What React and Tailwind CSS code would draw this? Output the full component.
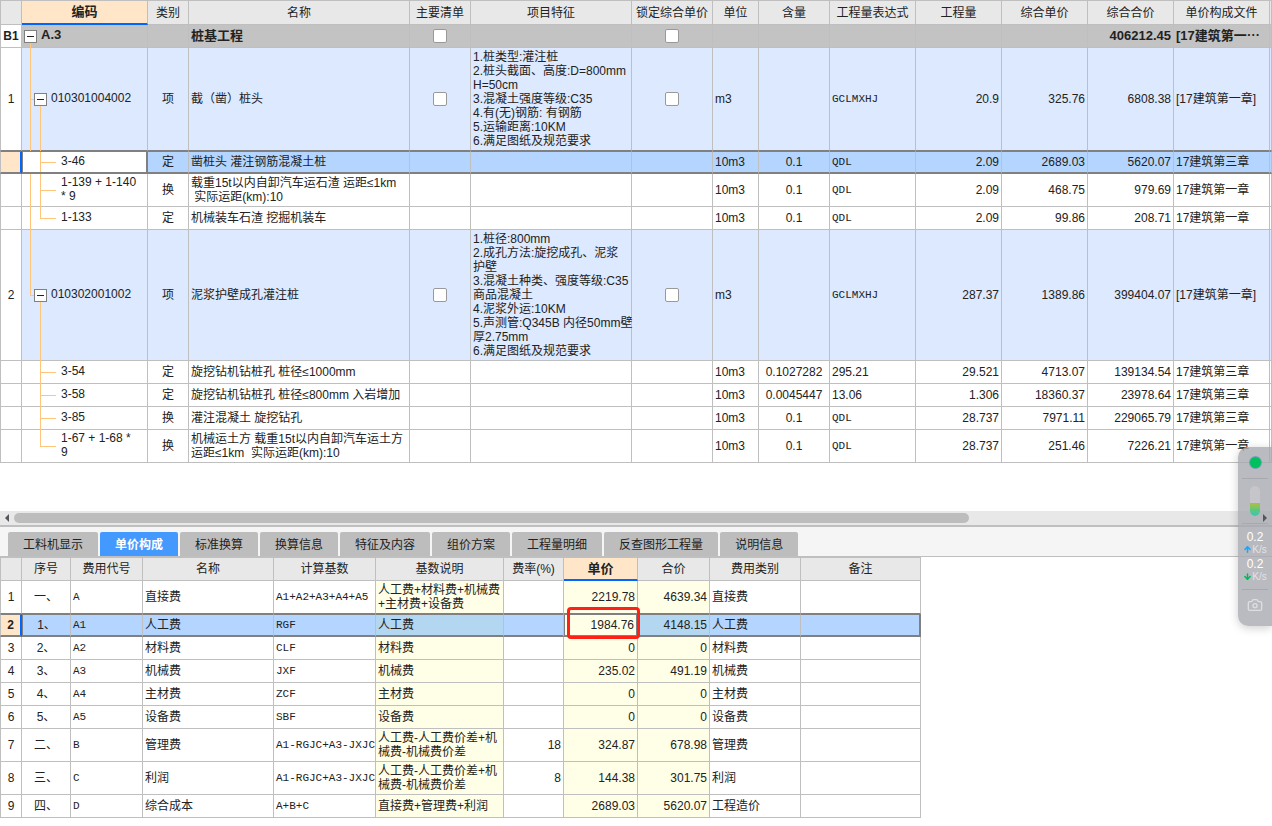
import { useState } from 'react';
import { Camera, ArrowUp, ArrowDown } from 'lucide-react';

const MONO = "font-['Liberation_Mono','Noto_Sans_CJK_SC',monospace] text-[11px]";

const mainColumns = [
    { key: 'no', title: '', col: 'w-[22px]', align: 'text-center' },
    { key: 'code', title: '编码', col: 'w-[126px]', align: 'text-left' },
    { key: 'type', title: '类别', col: 'w-[41px]', align: 'text-center' },
    { key: 'name', title: '名称', col: 'w-[221px]', align: 'text-left' },
    { key: 'main', title: '主要清单', col: 'w-[61px]', align: 'text-center' },
    { key: 'feature', title: '项目特征', col: 'w-[161px]', align: 'text-left' },
    { key: 'lock', title: '锁定综合单价', col: 'w-[81px]', align: 'text-center' },
    { key: 'unit', title: '单位', col: 'w-[46px]', align: 'text-left' },
    { key: 'content', title: '含量', col: 'w-[71px]', align: 'text-center' },
    { key: 'expr', title: '工程量表达式', col: 'w-[86px]', align: 'text-left' },
    { key: 'qty', title: '工程量', col: 'w-[86px]', align: 'text-right' },
    { key: 'price', title: '综合单价', col: 'w-[86px]', align: 'text-right' },
    { key: 'total', title: '综合合价', col: 'w-[86px]', align: 'text-right' },
    { key: 'file', title: '单价构成文件', col: 'w-[96px]', align: 'text-left' },
    { key: 'rest', title: '', col: '', align: 'text-left' },
];

const mainRows = [
    { id: 'b1', no: 'B1', level: 0, h: 'h-[23px]', code: 'A.3', name: '桩基工程', total: '406212.45', file: '[17建筑第一⋯' },
    {
        id: 'r1', no: '1', level: 1, h: 'h-[103px]', code: '010301004002', type: '项', name: '截（凿）桩头',
        feature: '1.桩类型:灌注桩\n2.桩头截面、高度:D=800mm\nH=50cm\n3.混凝土强度等级:C35\n4.有(无)钢筋: 有钢筋\n5.运输距离:10KM\n6.满足图纸及规范要求',
        unit: 'm3', expr: 'GCLMXHJ', qty: '20.9', price: '325.76', total: '6808.38', file: '[17建筑第一章]',
    },
    { id: 'r2', level: 2, h: 'h-[23px]', outer: true, code: '3-46', type: '定', name: '凿桩头 灌注钢筋混凝土桩', unit: '10m3', content: '0.1', expr: 'QDL', qty: '2.09', price: '2689.03', total: '5620.07', file: '17建筑第三章' },
    { id: 'r3', level: 2, h: 'h-[33px]', outer: true, code: '1-139 + 1-140\n* 9', type: '换', name: '载重15t以内自卸汽车运石渣 运距≤1km\n 实际运距(km):10', unit: '10m3', content: '0.1', expr: 'QDL', qty: '2.09', price: '468.75', total: '979.69', file: '17建筑第一章' },
    { id: 'r4', level: 2, h: 'h-[23px]', outer: true, last: true, code: '1-133', type: '定', name: '机械装车石渣 挖掘机装车', unit: '10m3', content: '0.1', expr: 'QDL', qty: '2.09', price: '99.86', total: '208.71', file: '17建筑第一章' },
    {
        id: 'r5', no: '2', level: 1, last: true, h: 'h-[131px]', code: '010302001002', type: '项', name: '泥浆护壁成孔灌注桩',
        feature: '1.桩径:800mm\n2.成孔方法:旋挖成孔、泥浆\n护壁\n3.混凝土种类、强度等级:C35\n商品混凝土\n4.泥浆外运:10KM\n5.声测管:Q345B 内径50mm壁\n厚2.75mm\n6.满足图纸及规范要求',
        unit: 'm3', expr: 'GCLMXHJ', qty: '287.37', price: '1389.86', total: '399404.07', file: '[17建筑第一章]',
    },
    { id: 'r6', level: 2, h: 'h-[23px]', code: '3-54', type: '定', name: '旋挖钻机钻桩孔 桩径≤1000mm', unit: '10m3', content: '0.1027282', expr: '295.21', qty: '29.521', price: '4713.07', total: '139134.54', file: '17建筑第三章' },
    { id: 'r7', level: 2, h: 'h-[23px]', code: '3-58', type: '定', name: '旋挖钻机钻桩孔 桩径≤800mm 入岩增加', unit: '10m3', content: '0.0045447', expr: '13.06', qty: '1.306', price: '18360.37', total: '23978.64', file: '17建筑第三章' },
    { id: 'r8', level: 2, h: 'h-[23px]', code: '3-85', type: '换', name: '灌注混凝土 旋挖钻孔', unit: '10m3', content: '0.1', expr: 'QDL', qty: '28.737', price: '7971.11', total: '229065.79', file: '17建筑第三章' },
    { id: 'r9', level: 2, h: 'h-[33px]', last: true, code: '1-67 + 1-68 *\n9', type: '换', name: '机械运土方 载重15t以内自卸汽车运土方\n运距≤1km  实际运距(km):10', unit: '10m3', content: '0.1', expr: 'QDL', qty: '28.737', price: '251.46', total: '7226.21', file: '17建筑第一章' },
];

const tabs = ['工料机显示', '单价构成', '标准换算', '换算信息', '特征及内容', '组价方案', '工程量明细', '反查图形工程量', '说明信息'];

const feeColumns = [
    { key: 'no', title: '', col: 'w-[22px]', align: 'text-center' },
    { key: 'seq', title: '序号', col: 'w-[49px]', align: 'text-center' },
    { key: 'code', title: '费用代号', col: 'w-[72px]', align: 'text-left' },
    { key: 'name', title: '名称', col: 'w-[131px]', align: 'text-left' },
    { key: 'base', title: '计算基数', col: 'w-[102px]', align: 'text-left' },
    { key: 'desc', title: '基数说明', col: 'w-[128px]', align: 'text-left' },
    { key: 'rate', title: '费率(%)', col: 'w-[60px]', align: 'text-right' },
    { key: 'price', title: '单价', col: 'w-[74px]', align: 'text-right' },
    { key: 'total', title: '合价', col: 'w-[72px]', align: 'text-right' },
    { key: 'kind', title: '费用类别', col: 'w-[91px]', align: 'text-left' },
    { key: 'note', title: '备注', col: 'w-[120px]', align: 'text-left' },
];

const feeRows = [
    { no: '1', h: 'h-[33px]', seq: '一、', code: 'A', name: '直接费', base: 'A1+A2+A3+A4+A5', desc: '人工费+材料费+机械费\n+主材费+设备费', price: '2219.78', total: '4639.34', kind: '直接费' },
    { no: '2', h: 'h-[23px]', seq: '1、', code: 'A1', name: '人工费', base: 'RGF', desc: '人工费', price: '1984.76', total: '4148.15', kind: '人工费' },
    { no: '3', h: 'h-[23px]', seq: '2、', code: 'A2', name: '材料费', base: 'CLF', desc: '材料费', price: '0', total: '0', kind: '材料费' },
    { no: '4', h: 'h-[23px]', seq: '3、', code: 'A3', name: '机械费', base: 'JXF', desc: '机械费', price: '235.02', total: '491.19', kind: '机械费' },
    { no: '5', h: 'h-[23px]', seq: '4、', code: 'A4', name: '主材费', base: 'ZCF', desc: '主材费', price: '0', total: '0', kind: '主材费' },
    { no: '6', h: 'h-[23px]', seq: '5、', code: 'A5', name: '设备费', base: 'SBF', desc: '设备费', price: '0', total: '0', kind: '设备费' },
    { no: '7', h: 'h-[33px]', seq: '二、', code: 'B', name: '管理费', base: 'A1-RGJC+A3-JXJC', desc: '人工费-人工费价差+机\n械费-机械费价差', rate: '18', price: '324.87', total: '678.98', kind: '管理费' },
    { no: '8', h: 'h-[33px]', seq: '三、', code: 'C', name: '利润', base: 'A1-RGJC+A3-JXJC', desc: '人工费-人工费价差+机\n械费-机械费价差', rate: '8', price: '144.38', total: '301.75', kind: '利润' },
    { no: '9', h: 'h-[23px]', seq: '四、', code: 'D', name: '综合成本', base: 'A+B+C', desc: '直接费+管理费+利润', price: '2689.03', total: '5620.07', kind: '工程造价' },
];

// horizontal borders: the selected row gets a thick frame, shared with the row above it
function rowBorder(index, selected) {
    if (index === selected) return 'border-b-2 border-b-[#808080] border-t border-t-[#808080]';
    if (index === selected - 1) return 'border-b border-b-[#808080]';
    return 'border-b border-b-[#bfbfbf]';
}

function HeadCell({ column, first, active, height }) {
    return (
        <th
            scope="col"
            className={`border-t border-r border-[#bfbfbf] p-0 text-center whitespace-nowrap ${height} ${first ? 'border-l' : ''} ${active
                ? 'border-b-2 border-b-[#0066ff] bg-[#ffe6c8] text-[13px] font-bold'
                : 'border-b bg-[#e8e8e8] font-normal'
            }`}
        >
            {column.title}
        </th>
    );
}

function NumberCell({ value, bold, selected, border }) {
    return (
        <td
            className={`border-l border-l-[#bfbfbf] p-0 text-center text-[12px] ${border} ${bold ? 'font-bold' : ''} ${selected
                ? 'border-r-2 border-r-[#0066ff] border-y-[#bfbfbf] bg-[#ffe6c8]'
                : 'border-r border-r-[#bfbfbf] bg-white'
            }`}
        >
            {value}
        </td>
    );
}

function TreeCell({ row, open, selected, onToggle }) {
    const line = 'absolute bg-[#ffc57a]';
    // the selected cell has a left border of its own
    const inner = selected ? 'left-[17px]' : 'left-[18px]';
    const leafPad = selected ? 'pl-[38px]' : 'pl-[39px]';
    return (
        <>
            {row.level === 0 && open && <span className={`${line} top-1/2 -bottom-px left-2 w-px`} />}
            {!selected && (row.outer || (row.level === 1 && !row.last)) && <span className={`${line} top-0 -bottom-px left-2 w-px`} />}
            {row.level === 1 && row.last && <span className={`${line} top-0 bottom-1/2 left-2 w-px`} />}
            {row.level === 1 && <span className={`${line} top-1/2 left-2 h-px w-1`} />}
            {row.level === 1 && open && <span className={`${line} top-1/2 -bottom-px left-[18px] w-px`} />}
            {row.level === 2 && <span className={`${line} top-0 w-px ${inner} ${row.last ? 'bottom-1/2' : selected ? 'bottom-0' : '-bottom-px'}`} />}
            {row.level === 2 && <span className={`${line} top-1/2 h-px w-4 ${inner}`} />}
            <div className={`flex items-center gap-1 ${row.level === 0 ? 'pl-0.5' : row.level === 1 ? 'pl-3' : leafPad}`}>
                {row.level < 2 && (
                    <button
                        type="button"
                        aria-label={open ? '折叠' : '展开'}
                        onClick={onToggle}
                        className="relative flex size-[13px] shrink-0 items-center justify-center border border-[#808080] bg-white"
                    >
                        <span className="h-px w-[7px] bg-[#222]" />
                    </button>
                )}
                <span className="pb-0.5 whitespace-pre">{row.code}</span>
            </div>
        </>
    );
}

function MainTable() {
    const [selected, setSelected] = useState(2);
    const [closed, setClosed] = useState({});

    // parents of each row, so that a collapsed node hides its children
    let parent = null;
    const visible = mainRows.filter((row) => {
        if (row.level === 0) return true;
        if (row.level === 1) {
            parent = row.id;
            return !closed.b1;
        }
        return !closed.b1 && !closed[parent];
    });

    return (
        <table className="w-full table-fixed border-separate border-spacing-0">
            <colgroup>
                {mainColumns.map((c) => <col key={c.key} className={c.col} />)}
            </colgroup>
            <thead>
                <tr>
                    {mainColumns.map((c, i) => (
                        <HeadCell key={c.key} column={c} first={i === 0} active={c.key === 'code'} height="h-[25px]" />
                    ))}
                </tr>
            </thead>
            <tbody>
                {visible.map((row, index) => {
                    const isSelected = index === selected;
                    const border = rowBorder(index, selected);
                    const bold = row.level === 0;
                    const bg = isSelected ? 'bg-[#b3d5ff]' : row.level === 0 ? 'bg-[#c3c3c3]' : row.level === 1 ? 'bg-[#dce9ff]' : 'bg-white';
                    return (
                        <tr key={row.id} className={`${row.h} ${bold ? 'text-[13px] font-bold' : ''}`} onClick={() => setSelected(index)}>
                            <NumberCell value={row.no} bold={bold} selected={isSelected} border={border} />
                            <td
                                className={`relative p-0 ${border} ${isSelected
                                    ? 'border-r-2 border-l border-x-[#808080] bg-white'
                                    : `border-r border-r-[#bfbfbf] ${bg}`
                                }`}
                            >
                                <TreeCell
                                    row={row}
                                    open={!closed[row.id]}
                                    selected={isSelected}
                                    onToggle={() => setClosed({ ...closed, [row.id]: !closed[row.id] })}
                                />
                            </td>
                            {mainColumns.slice(2).map((c) => {
                                const isCheck = (c.key === 'main' || c.key === 'lock') && row.level < 2;
                                return (
                                    <td
                                        key={c.key}
                                        className={`border-r border-r-[#bfbfbf] px-0.5 pt-0 whitespace-pre ${isCheck ? 'pb-0' : 'pb-px'} ${border} ${bg} ${c.align} ${c.key === 'expr' && /[A-Z]/.test(row.expr || '') ? MONO : ''}`}
                                    >
                                        {isCheck ? (
                                            <input
                                                type="checkbox"
                                                aria-label={c.title}
                                                className="mx-auto block size-[14px] appearance-none rounded-[2px] border border-[#999] bg-white checked:bg-[#0066ff]"
                                            />
                                        ) : row[c.key]}
                                    </td>
                                );
                            })}
                        </tr>
                    );
                })}
            </tbody>
        </table>
    );
}

function HorizontalScroll() {
    return (
        <div className="flex h-[14px] items-center gap-1 bg-[#e8e8e8] px-1">
            <button type="button" aria-label="向左滚动" className="shrink-0">
                <svg width="6" height="8" viewBox="0 0 6 8"><path d="M5 0v8L1 4z" fill="#55555c" /></svg>
            </button>
            <div className="flex grow">
                <div className="h-[10px] w-[76.8%] rounded-full bg-[#bdbdbd]" />
            </div>
            <button type="button" aria-label="向右滚动" className="relative z-10 shrink-0">
                <svg width="6" height="8" viewBox="0 0 6 8"><path d="M1 0v8l4-4z" fill="#55555c" /></svg>
            </button>
        </div>
    );
}

function FeeTable() {
    const [selected, setSelected] = useState(1);

    return (
        <table className="w-0 table-fixed border-separate border-spacing-0">
            <colgroup>
                {feeColumns.map((c) => <col key={c.key} className={c.col} />)}
            </colgroup>
            <thead>
                <tr>
                    {feeColumns.map((c, i) => (
                        <HeadCell key={c.key} column={c} first={i === 0} active={c.key === 'price'} height="h-[24px]" />
                    ))}
                </tr>
            </thead>
            <tbody>
                {feeRows.map((row, index) => {
                    const isSelected = index === selected;
                    const border = rowBorder(index, selected);
                    return (
                        <tr key={row.no} className={row.h} onClick={() => setSelected(index)}>
                            <NumberCell value={row.no} bold={isSelected} selected={isSelected} border={border} />
                            {feeColumns.slice(1).map((c) => {
                                const yellow = c.key === 'desc' || c.key === 'price' || c.key === 'total';
                                const current = isSelected && c.key === 'price';
                                let bg = yellow ? 'bg-[#ffffe8]' : 'bg-white';
                                if (isSelected && !current) bg = yellow ? 'bg-[#b3d7f0]' : 'bg-[#b3d5ff]';
                                let side = 'border-r border-r-[#bfbfbf]';
                                if (current) side = 'relative border-r-2 border-l border-x-[#808080]';
                                if (isSelected && c.key === 'seq') side = 'border-l border-r border-l-[#808080] border-r-[#bfbfbf]';
                                if (isSelected && c.key === 'note') side = 'border-r-2 border-r-[#808080]';
                                return (
                                    <td
                                        key={c.key}
                                        className={`px-0.5 pt-0 pb-px whitespace-pre ${side} ${border} ${bg} ${c.align} ${c.key === 'code' || c.key === 'base' ? MONO : ''}`}
                                    >
                                        {row[c.key]}
                                        {row.no === '2' && c.key === 'price' && (
                                            <span className="pointer-events-none absolute -top-2 -right-1 -bottom-1 left-0.5 rounded-[4px] border-3 border-[#ff2016]" />
                                        )}
                                    </td>
                                );
                            })}
                        </tr>
                    );
                })}
            </tbody>
        </table>
    );
}

function Speed({ icon: Icon, color }) {
    return (
        <div className="text-center text-white">
            <div className="text-[12px] leading-[13px]">0.2</div>
            <div className="flex items-center justify-center text-[10px] leading-[11px] text-[#e2e2e6]">
                <Icon className={color} size={9} strokeWidth={4} />
                K/s
            </div>
        </div>
    );
}

function FloatingMonitor() {
    return (
        <aside className="absolute top-[447px] right-0 flex h-[179px] w-[34px] flex-col items-center rounded-l-[10px] bg-[#a9aab0]/80 shadow-[0_2px_10px_rgba(0,0,0,0.2)]">
            <span className="mt-[10px] size-[11px] rounded-full bg-[#00c060] ring-1 ring-[#5a86b8]/60" />
            <span className="mt-[10px] h-px w-[26px] bg-[#a8a8b0]" />
            <div className="mt-[7px] flex h-[30px] w-[10px] shrink-0 flex-col justify-end overflow-hidden rounded-full bg-[#c6c6ca]">
                <span className="h-[13px] bg-linear-to-b from-[#b0bc38] via-[#5cc878] to-[#3fc3b6]" />
            </div>
            <span className="mt-[7px] h-px w-[26px] bg-[#a8a8b0]" />
            <div className="mt-[7px] flex flex-col gap-[3px]">
                <Speed icon={ArrowUp} color="text-[#16a8ff]" />
                <Speed icon={ArrowDown} color="text-[#00b85c]" />
            </div>
            <span className="mt-[7px] h-px w-[26px] bg-[#a8a8b0]" />
            <button type="button" aria-label="截图" className="mt-[7px] text-[#dedee2]">
                <Camera size={16} strokeWidth={2} />
            </button>
        </aside>
    );
}

export default function App() {
    const [activeTab, setActiveTab] = useState('单价构成');

    return (
        <div className="relative min-h-screen overflow-hidden bg-white font-['Liberation_Sans','Noto_Sans_CJK_SC',sans-serif] text-[12px] leading-[14px] text-[#222]">
            <div className="pb-12">
                <MainTable />
            </div>
            <HorizontalScroll />

            <div className="flex items-end gap-0.5 border-t-2 border-b border-[#bfbfbf] bg-[#f5f5f5] px-2 pt-[5px]" role="tablist">
                {tabs.map((tab) => (
                    <button
                        key={tab}
                        type="button"
                        role="tab"
                        aria-selected={activeTab === tab}
                        onClick={() => setActiveTab(tab)}
                        className={`h-6 rounded-t-[2px] px-[15px] pt-0.5 ${activeTab === tab
                            ? 'bg-[#4499ff] font-bold text-white'
                            : 'bg-[#bdbdbd]'
                        }`}
                    >
                        {tab}
                    </button>
                ))}
            </div>
            <FeeTable />

            <FloatingMonitor />
        </div>
    );
}
